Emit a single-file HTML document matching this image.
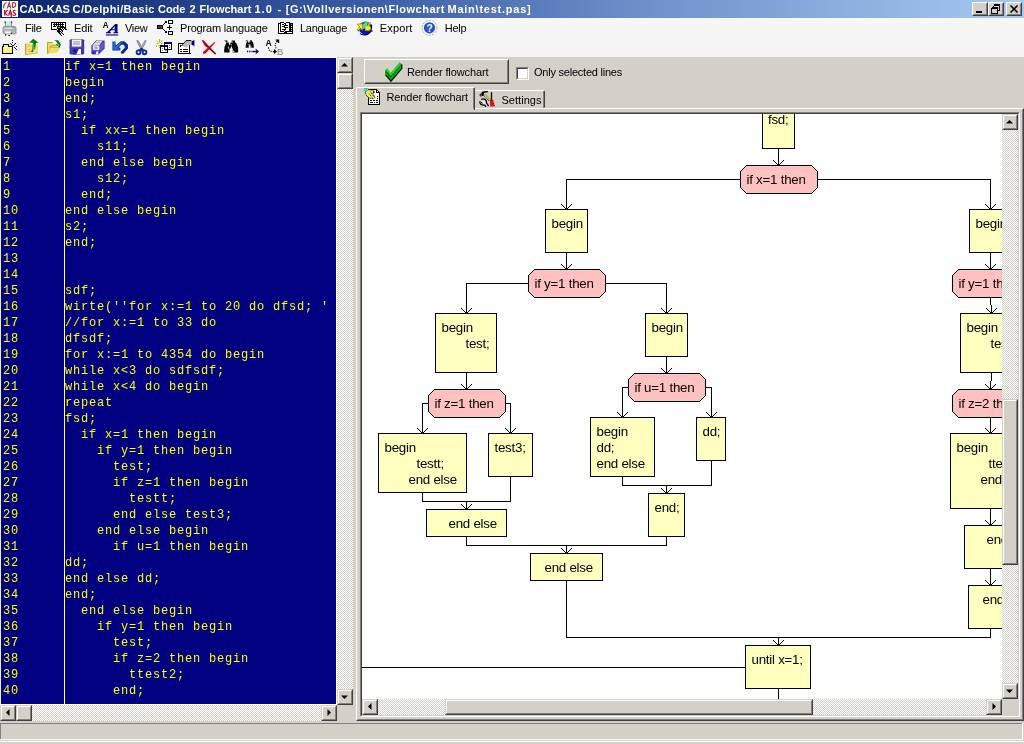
<!DOCTYPE html><html><head><meta charset="utf-8"><title>CAD-KAS Code 2 Flowchart</title><style>
html,body{margin:0;padding:0;}
body{width:1024px;height:744px;overflow:hidden;background:#d4d0c8;position:relative;font-family:"Liberation Sans",sans-serif;}
.abs,.t,.b3,.tr,div,svg{position:absolute;}
.t{white-space:pre;font-family:"Liberation Sans",sans-serif;}
#root{left:0;top:0;width:1024px;height:744px;will-change:transform;}
.m{font-family:"Liberation Mono",monospace;}
.dither{background:repeating-conic-gradient(#ffffff 0 25%,#d4d0c8 0 50%) 0 0/2px 2px;}
/* classic raised button */
.b3{background:#d4d0c8;box-sizing:border-box;border:1px solid;border-color:#d4d0c8 #404040 #404040 #d4d0c8;}
.b3:before{content:"";position:absolute;left:0;top:0;right:0;bottom:0;border:1px solid;border-color:#ffffff #808080 #808080 #ffffff;}
.b3w{background:#d4d0c8;box-sizing:border-box;border:1px solid;border-color:#ffffff #404040 #404040 #ffffff;}
.b3w:before{content:"";position:absolute;left:0;top:0;right:0;bottom:0;border:1px solid;border-color:#d4d0c8 #808080 #808080 #d4d0c8;}
</style></head><body><div id="root">
<div style="left:0;top:0;width:1024px;height:18px;background:linear-gradient(90deg,#0a246a 0%,#3a5ba3 35%,#6b8fc9 62%,#a6caf0 100%);"></div>
<svg style="left:2px;top:1px" width="16" height="16" viewBox="0 0 16 16"><rect width="16" height="16" fill="#fff"/><path d="M4.5 1.5C2.5 2.5 1.3 5 1.8 7.3 M5.2 7.5L7.3 1.5L8.6 7.2 M6 5.4h2.4 M10.5 1.8v5 M10.5 1.8c4-1 4.6 4 .2 5" fill="none" stroke="#9c3a3a" stroke-width="1.1"/><path d="M2.6 9v5.5 M5.6 9L2.8 12L5.8 14.6 M6.6 14.6L8.3 9.2L10 14.6 M7.2 12.8h2.2 M13.6 9.6c-2.4-1-3.2 1.6-1.2 2.3c2.2.8 1.4 3.2-1.4 2.2 M9.3 12v4" fill="none" stroke="#d0142c" stroke-width="1.25"/></svg>
<span class="t " style="left:19.5px;top:2.19px;font-size:11px;line-height:14px;height:14px;color:#fff;font-weight:bold;letter-spacing:-0.060px;">CAD-KAS</span>
<span class="t " style="left:72.6px;top:2.19px;font-size:11px;line-height:14px;height:14px;color:#fff;font-weight:bold;letter-spacing:0.370px;">C/Delphi/Basic</span>
<span class="t " style="left:158.1px;top:2.19px;font-size:11px;line-height:14px;height:14px;color:#fff;font-weight:bold;letter-spacing:-0.075px;">Code</span>
<span class="t " style="left:189.4px;top:2.19px;font-size:11px;line-height:14px;height:14px;color:#fff;font-weight:bold;letter-spacing:0.682px;">2</span>
<span class="t " style="left:199.5px;top:2.19px;font-size:11px;line-height:14px;height:14px;color:#fff;font-weight:bold;letter-spacing:-0.017px;">Flowchart</span>
<span class="t " style="left:254.5px;top:2.19px;font-size:11px;line-height:14px;height:14px;color:#fff;font-weight:bold;letter-spacing:1.003px;">1.0</span>
<span class="t " style="left:277.4px;top:2.19px;font-size:11px;line-height:14px;height:14px;color:#fff;font-weight:bold;letter-spacing:2.036px;">-</span>
<span class="t " style="left:285.8px;top:2.19px;font-size:11px;line-height:14px;height:14px;color:#fff;font-weight:bold;letter-spacing:0.516px;">[G:\Vollversionen\Flowchart</span>
<span class="t " style="left:447.5px;top:2.19px;font-size:11px;line-height:14px;height:14px;color:#fff;font-weight:bold;letter-spacing:0.761px;">Main\test.pas]</span>
<div class="b3w" style="left:972px;top:2px;width:16px;height:14px;"></div>
<div style="left:976px;top:11px;width:6px;height:2px;background:#000"></div>
<div class="b3w" style="left:988px;top:2px;width:16px;height:14px;"></div>
<svg style="left:988px;top:2px" width="16" height="14" shape-rendering="crispEdges"><path d="M5.5 3.5h6v5h-2 M5.5 2.5h6 M5.5 3.5v2 M3.5 6.5h6v5h-6z M3.5 5.5h6" fill="none" stroke="#000"/></svg>
<div class="b3w" style="left:1006px;top:2px;width:16px;height:14px;"></div>
<svg style="left:1006px;top:2px" width="16" height="14"><path d="M4.5 3.5l7 7 M11.5 3.5l-7 7" fill="none" stroke="#000" stroke-width="1.7"/></svg>
<div style="left:0;top:18px;width:1024px;height:39px;background:linear-gradient(180deg,#fbf6f6 0,#f7f6f5 4px,#f4f5f4 14px,#f4f5f3 100%);"></div>
<svg style="left:2px;top:20px" width="16" height="16" viewBox="0 0 16 16"><path d="M3.2 1.2L3.8 6.5H9.6L9.2 1.2" fill="#cfe9f0" stroke="#6c94a0" stroke-width="0.9"/><path d="M2.8 1.6L3.6 3.2 M9.4 1.4L9.9 3.4" stroke="#3c5870" stroke-width="1.2"/><rect x="1" y="6.3" width="13" height="7.4" rx="2" fill="#b4b4b4" stroke="#8c8c8c" stroke-width="0.9"/><path d="M2.4 8.2h10" stroke="#dcdcdc" stroke-width="1.4"/><path d="M3 12.4h6" stroke="#f4f4f4" stroke-width="2.2"/><rect x="9.5" y="9.6" width="2.6" height="1.5" fill="#86c08a"/><path d="M10 7.6h3" stroke="#8c8c8c" stroke-width="0.9"/><path d="M3 14.6l1.2.6 M6.5 15.4l1.4.3" stroke="#111" stroke-width="1.4"/><path d="M8.5 13.6l5 .4 1.6-1.2" fill="none" stroke="#a8a8a0" stroke-width="1"/><rect x="8.6" y="12.6" width="1.6" height="1.6" fill="#50507a"/></svg>
<svg style="left:50px;top:21px" width="18" height="16" viewBox="0 0 18 16" shape-rendering="crispEdges"><rect x="1.5" y="1.5" width="14" height="7" fill="#fff" stroke="#000" stroke-width="1"/><rect x="2" y="1" width="13" height="1" fill="#000"/><rect x="3" y="3" width="11" height="1" fill="#000"/><rect x="3" y="5" width="11" height="1" fill="#000"/><rect x="3" y="2" width="11" height="1" fill="#fffbe0"/><rect x="3" y="4" width="11" height="1" fill="#fffbe0"/><path d="M4 2.5h10 M4 4.5h10" stroke="#000" stroke-width="1" stroke-dasharray="1 1"/><rect x="3" y="6" width="12" height="2" fill="#000"/><rect x="3" y="6" width="2" height="2" fill="#fff"/><path d="M5.5 6L12.5 15" stroke="#fff" stroke-width="2.2"/><path d="M6 8L12.5 15.5 M8 8.5L14 14" stroke="#000" stroke-width="1"/><path d="M9 7h7l-3.5 4.5z" fill="#000"/><path d="M10.5 7.5h4 M11.5 8.5h3 M12.5 9.5h1" stroke="#fff" stroke-width="1" stroke-dasharray="1 1"/><rect x="16" y="8" width="1" height="1" fill="#000"/><rect x="7" y="7" width="3" height="1" fill="#000"/><rect x="8" y="6" width="2" height="1" fill="#aaa"/></svg>
<svg style="left:102px;top:19px" width="18" height="18" viewBox="0 0 18 18"><text x="0.8" y="8.5" font-family="Liberation Sans" font-weight="bold" font-size="9" fill="#000" textLength="5.8" lengthAdjust="spacingAndGlyphs">A</text><path d="M13.2 5H15.5V13L16.2 13.2V14.2H11.6V13.2L12.700 13V11.200H9.200L7.600 13L8.800 13.2V14.2H4V13.2L5.300 13z M12.700 7.200L10 10.200H12.700z" fill="#000080" fill-rule="evenodd"/><rect x="4" y="15.4" width="12.2" height="1.1" fill="#000080"/></svg>
<svg style="left:156px;top:19px" width="18" height="17" viewBox="0 0 18 17" shape-rendering="crispEdges"><rect x="1.5" y="6.5" width="5" height="3" fill="#6e2c6e" stroke="#000"/><rect x="12.5" y="1.5" width="4" height="3" fill="#fff" stroke="#000"/><rect x="12.5" y="12.5" width="4" height="3" fill="#fff" stroke="#000"/><rect x="11" y="8" width="5" height="1" fill="#000"/><rect x="13" y="6" width="1" height="5" fill="#000"/><rect x="7" y="5" width="1" height="1" fill="#000"/><rect x="8" y="4" width="1" height="1" fill="#000"/><rect x="9" y="3" width="1" height="1" fill="#000"/><path d="M8 2h3v3z" fill="#000"/><rect x="7" y="10" width="1" height="1" fill="#000"/><rect x="8" y="11" width="1" height="1" fill="#000"/><rect x="9" y="12" width="1" height="1" fill="#000"/><path d="M8 14h3v-3z" fill="#000"/></svg>
<svg style="left:277px;top:21px" width="18" height="14" viewBox="0 0 18 14" shape-rendering="crispEdges"><rect x="1" y="2" width="15" height="11" fill="#000"/><rect x="2" y="3" width="1" height="8" fill="#fff"/><rect x="2" y="11" width="5" height="1" fill="#fff"/><rect x="10" y="11" width="5" height="1" fill="#fff"/><rect x="3" y="1" width="4" height="10" fill="#000"/><rect x="4" y="2" width="3" height="8" fill="#fff"/><rect x="9" y="1" width="4" height="10" fill="#000"/><rect x="9" y="2" width="3" height="8" fill="#fff"/><rect x="5" y="3" width="2" height="1" fill="#000"/><rect x="5" y="5" width="2" height="1" fill="#000"/><rect x="5" y="8" width="2" height="1" fill="#000"/><rect x="9" y="4" width="2" height="1" fill="#000"/><rect x="9" y="6" width="2" height="1" fill="#000"/><rect x="7" y="2" width="2" height="10" fill="#000"/><rect x="7" y="3" width="1" height="1" fill="#fff"/><rect x="8" y="5" width="1" height="1" fill="#fff"/><rect x="7" y="7" width="1" height="1" fill="#fff"/><rect x="8" y="9" width="1" height="1" fill="#fff"/><rect x="7" y="10" width="1" height="1" fill="#fff"/><rect x="14" y="3" width="1" height="1" fill="#a06060"/><rect x="14" y="5" width="1" height="1" fill="#fff"/><rect x="14" y="7" width="1" height="1" fill="#fff"/><rect x="14" y="9" width="1" height="1" fill="#9cc0a0"/></svg>
<svg style="left:356px;top:20px" width="18" height="16" viewBox="0 0 18 16"><circle cx="9.5" cy="8.2" r="6.6" fill="#1010c8"/><path d="M5 4.5C7 1 12 1 14.5 4L13 8.5H8L6.5 9.5z" fill="#30e0d8"/><path d="M5.2 4.4C6.4 2.6 8 1.8 9.6 1.7L8.4 3.6L6.6 4.8z M11.6 2.6L14.2 4L12.6 6.6L11 5.4z" fill="#108a20"/><path d="M1.2 4h5.4v6.2L5 8.8L2.6 11.6L1 9.8L3.6 7z" fill="#ffee10" stroke="#8a7a10" stroke-width="0.7"/><path d="M2 11l3-3" stroke="#304010" stroke-width="1" stroke-dasharray="1 0.6"/><path d="M15 2.6L12.6 5.4L14.6 7.2V10.6H9.2V5L11.2 6.2L13.4 2.4z" fill="#ffee10" stroke="#a09010" stroke-width="0.5"/><path d="M15.6 4.5v3 M14 9.5l1 1.6h1.6" stroke="#000" stroke-width="1" fill="none"/><path d="M4 13.6c2.5 2 7.5 2 10.4-1.8" fill="none" stroke="#000040" stroke-width="1.2"/></svg>
<svg style="left:421px;top:19px" width="18" height="18" viewBox="0 0 18 18"><circle cx="8.5" cy="8.8" r="7.4" fill="#f4f8ff" stroke="#8c94a8" stroke-width="0.7" stroke-dasharray="2.2 1.2"/><circle cx="8.5" cy="8.8" r="5.6" fill="#2c50c0"/><circle cx="7.6" cy="8" r="3.6" fill="#3a5cd0" opacity="0.6"/><text x="5.5" y="12.6" font-family="Liberation Sans" font-weight="bold" font-size="10.5" fill="#e8ffff">?</text></svg>
<svg style="left:1px;top:38px" width="18" height="18" viewBox="0 0 18 18" shape-rendering="crispEdges"><path d="M1.5 15.5V8.5H2.5V6.5H7.5V8.5H11.5V15.5z" fill="#f2f088" stroke="#000" stroke-width="1"/><rect x="3" y="8" width="4" height="1" fill="#f2f088"/><path d="M3.5 9.5h7" stroke="#fdfdc8" stroke-width="1"/><rect x="11" y="2" width="1" height="1" fill="#000"/><rect x="11" y="4" width="1" height="1" fill="#000"/><rect x="9" y="5" width="1" height="1" fill="#333"/><rect x="10" y="6" width="1" height="1" fill="#000"/><rect x="14" y="5" width="1" height="1" fill="#000"/><rect x="13" y="6" width="1" height="1" fill="#000"/><rect x="12" y="7" width="1" height="1" fill="#000"/><rect x="15" y="8" width="1" height="1" fill="#000"/><rect x="13" y="9" width="1" height="1" fill="#000"/><rect x="14" y="10" width="1" height="1" fill="#000"/><rect x="15" y="11" width="1" height="1" fill="#333"/><rect x="11" y="7" width="1" height="2" fill="#444"/></svg>
<svg style="left:23px;top:38px" width="18" height="18" viewBox="0 0 18 18"><path d="M2.5 5.5H7L8 6.8H14.6V14.6L3 16.6z" fill="#ecd264"/><path d="M2.5 5.5V16.6L14.6 14.6" fill="none" stroke="#c8a83c" stroke-width="1.2"/><path d="M3.6 9.2L14.6 8.4V14.6L3.4 16.4z" fill="#f2e070"/><path d="M5 11.5h3 M5.5 13.5h2.5" stroke="#f0b060" stroke-width="1"/><path d="M6.2 4.8L10.2 0.8L15.4 4.4L13 5L12.2 10.6L9.2 13.4L9.8 4.8z" fill="#0c7a18"/><path d="M10.6 3.2L11.4 11L10 12.2z" fill="#52d458"/><path d="M8.4 13.6l1.4-.6" stroke="#052" stroke-width="1.4"/></svg>
<svg style="left:45px;top:38px" width="18" height="18" viewBox="0 0 18 18"><path d="M2.5 4.6H7.6L8.6 6H12.8V9.2L15.2 9.6L12.4 14.4L2.5 15.8z" fill="#ece068"/><path d="M2.5 4.6V15.8 M2.5 4.6H7.6 M4.4 9.4L6 7.8H11.5" fill="none" stroke="#b8a030" stroke-width="1"/><path d="M3 15.6L5.2 9.4L15.2 9.6" fill="none" stroke="#c8b040" stroke-width="0.8"/><path d="M9.2 2.2H13.2L16 6.6L14.4 9.4L10.8 6.4L12.2 5.6L11.4 3.4z" fill="#0a6a14"/><path d="M12.4 4.6L14.6 7.2L13.8 8.2L11.8 6.4z" fill="#5adc5a"/></svg>
<svg style="left:68px;top:38px" width="18" height="18" viewBox="0 0 18 18"><path d="M1.6 2.2L2.6 1.2H15.2L16.2 2.2V15.6L15.2 16.6H2.6L1.6 15.6z" fill="#3a38ac"/><path d="M1.6 9.5h14.6" stroke="#4a48c8" stroke-width="1.4"/><rect x="3.8" y="1.6" width="9.6" height="7" fill="#f6f6fa"/><rect x="5" y="3.2" width="7" height="1.2" fill="#a8a8a8"/><rect x="5" y="5" width="7" height="1.8" fill="#b4b4b4"/><rect x="5.2" y="11" width="7" height="5.6" fill="#2c2a90"/><path d="M8.2 16.6L10.8 11H13V16.6z" fill="#f4f4fa"/><path d="M6 11.4h2.2l-1.4 3z" fill="#101060"/></svg>
<svg style="left:89px;top:38px" width="18" height="18" viewBox="0 0 18 18"><path d="M2.4 8.2L7.4 2.4H15.6V10.4L9.6 16.4H3.6L2.4 15.2z" fill="#3c38b0"/><path d="M2.4 8.2L7.4 2.4H13.6L10.2 7.4H4.4z" fill="#dcdce4"/><path d="M3.8 7.6H10.4V12.2H3.8z" fill="#e8e8ec"/><path d="M5 8.6h3.4v2.6H5z" fill="#c0c0c4"/><path d="M6 9.4h1.6v1.2" fill="none" stroke="#888" stroke-width="0.7"/><path d="M7.6 2.6H13.4" stroke="#a8a8ac" stroke-width="1"/><path d="M6.6 4.4H11" stroke="#b8b8bc" stroke-width="1"/><path d="M2.4 8.2L7.4 2.4" stroke="#404060" stroke-width="0.8"/><path d="M11.4 7.6L12.6 5V12L11.4 14z M13.4 5L14.4 3.4V10L13.4 11.6z" fill="#7874d8"/><path d="M6.6 16.4L7.6 13H9.4L9.2 16.4z" fill="#f0f0f6"/><path d="M3.4 12.4L9 12.8" stroke="#5a58d0" stroke-width="1.4"/></svg>
<svg style="left:111px;top:38px" width="18" height="18" viewBox="0 0 18 18"><path d="M1.4 3.4H4.6V7.6L9.8 3.2H13.4L17 6.8V10.4L12.4 15.8H10.2L9.6 14L13.6 9.8V8L12.2 6.8H10.4L7.6 9.6H9.4V12.6H1.4z" fill="#0c3c9c"/><path d="M2.4 4.2H3.8V9.4L9.4 4.6L11 4.4L5.4 10.4H8.4V11.6H2.4z" fill="#2a7ad8"/><path d="M12.6 4.4L15.8 7.2V9.8L11.4 14.6" fill="none" stroke="#0a2a78" stroke-width="1.2"/></svg>
<svg style="left:133px;top:38px" width="18" height="18" viewBox="0 0 18 18"><path d="M3.400 2L5.600 2.600L10 10.800L7.800 11.600L4.200 5z" fill="#787888"/><path d="M13.600 2L11.400 2.600L7 10.800L9.200 11.600L12.800 5z" fill="#8c8c9c"/><path d="M4.600 3.400L8.600 10.600 M12.400 3.400L8.400 10.600" stroke="#b8b8c8" stroke-width="0.8"/><path d="M8.500 9.600L11 11.400L13.400 12.200L11.400 13.400L9.400 12.400L8.500 13.400L7.600 12.400L5.600 13.400L3.600 12.200L6 11.400z" fill="#0a2ca4"/><circle cx="5.500" cy="14.300" r="1.900" fill="#fff" stroke="#0a2ca4" stroke-width="1.9"/><circle cx="11.500" cy="14.300" r="1.900" fill="#fff" stroke="#0a2ca4" stroke-width="1.9"/></svg>
<svg style="left:155px;top:38px" width="18" height="18" viewBox="0 0 18 18"><path d="M4.5 1v7 M1.5 5.5h6 M2 2.6l5 5 M7.4 2.2L3 7.6" stroke="#b4b428" stroke-width="1"/><rect x="3.4" y="4.4" width="2.6" height="2.6" fill="#f8f870"/><rect x="1" y="7.6" width="1" height="1" fill="#666"/><path d="M4 8.6L5.5 10.5" stroke="#889" stroke-width="1"/><g shape-rendering="crispEdges"><rect x="9.5" y="4.5" width="7" height="7" fill="#fff" stroke="#000"/><rect x="9" y="4" width="8" height="2" fill="#000068"/><rect x="14" y="7" width="1" height="1" fill="#666"/><rect x="14" y="9" width="1" height="1" fill="#666"/><rect x="5.500" y="7.5" width="7" height="7" fill="#fff" stroke="#000"/><rect x="5" y="7" width="8" height="2" fill="#000068"/><rect x="9.5" y="8.5" width="3" height="3" fill="#fff" stroke="#000"/><rect x="7" y="10" width="1" height="1" fill="#666"/><rect x="7" y="12" width="1" height="1" fill="#666"/><rect x="10" y="12" width="2" height="1" fill="#888"/></g></svg>
<svg style="left:177px;top:38px" width="19" height="18" viewBox="0 0 19 18"><g shape-rendering="crispEdges"><rect x="1.5" y="5.5" width="11" height="10" fill="#fff" stroke="#000" stroke-width="1"/><rect x="1" y="5" width="12" height="1" fill="#000"/><rect x="1" y="15" width="13" height="1" fill="#000"/><rect x="3" y="11" width="2" height="1" fill="#000"/><rect x="6" y="11" width="5" height="1" fill="#000"/><rect x="3" y="13" width="2" height="1" fill="#000"/><rect x="6" y="13" width="5" height="1" fill="#000"/><rect x="3" y="7" width="1" height="2" fill="#000"/></g><path d="M4.4 8L9 2.6H14.4V7L11.8 7.2L9.6 9.6z" fill="#a8a8a8"/><path d="M4.4 8L9 2.6H14.2" fill="none" stroke="#000" stroke-width="1"/><path d="M5 8l4-4.6 M6.4 8.4l4-4.6 M7.8 8.8l3.6-4.2 M9.2 9.2l2.6-3" stroke="#fff" stroke-width="0.7" stroke-dasharray="0.9 0.9"/><path d="M10.4 3.4H14.6V6.8H11.6z" fill="#c4c4c8"/><path d="M14.6 3.2L17.4 2V8.6L16.4 7.4L14.6 6.8z" fill="#00007c"/></svg>
<svg style="left:199px;top:38px" width="19" height="18" viewBox="0 0 19 18"><path d="M2.6 2.2L4.4 2.2L17 15.6L16.2 16.6L11 11.6L6 8z" fill="#b00018"/><path d="M16.4 4.6L15.6 4L4 14L4.4 16L6.4 15.4z" fill="#cc0014"/><path d="M10 10.4L16.6 16" stroke="#800020" stroke-width="1.2"/></svg>
<svg style="left:221px;top:39px" width="18" height="15" viewBox="0 0 18 15"><g transform="translate(0,0.6) scale(1.07,1)"><path d="M3 1h3v2h1l1 3h0l1-3h1v-2h3v2h1l2 5v5h-5v-4h-3v4h-5v-5l2-5z" fill="#000"/><rect x="4" y="2" width="1" height="1" fill="#fff"/><rect x="10" y="2" width="1" height="1" fill="#fff"/><rect x="3" y="4.6" width="1" height="1" fill="#fff"/><rect x="9" y="4.6" width="1" height="1" fill="#fff"/><rect x="2" y="7" width="1" height="2.4" fill="#fff"/><rect x="6.600" y="7" width="1" height="2" fill="#ccc"/><rect x="9.200" y="7" width="1" height="2.4" fill="#fff"/><rect x="1.4" y="11" width="1" height="1.6" fill="#fff"/><rect x="11.4" y="11" width="1" height="1.6" fill="#fff"/></g></svg>
<svg style="left:243px;top:38px" width="18" height="18" viewBox="0 0 18 18"><g transform="translate(0.8,1.6) scale(0.62)"><path d="M3 1h3v2h1l1 3h0l1-3h1v-2h3v2h1l2 5v5h-5v-4h-3v4h-5v-5l2-5z" fill="#000"/><rect x="4" y="2" width="1" height="1" fill="#fff"/><rect x="10" y="2" width="1" height="1" fill="#fff"/><rect x="3" y="4.6" width="1" height="1" fill="#fff"/><rect x="9" y="4.6" width="1" height="1" fill="#fff"/><rect x="2" y="7" width="1" height="2.4" fill="#fff"/><rect x="6.600" y="7" width="1" height="2" fill="#ccc"/><rect x="9.200" y="7" width="1" height="2.4" fill="#fff"/><rect x="1.4" y="11" width="1" height="1.6" fill="#fff"/><rect x="11.4" y="11" width="1" height="1.6" fill="#fff"/></g><path d="M4 13.5h6" stroke="#000070" stroke-width="1.3" stroke-dasharray="1.2 1"/><path d="M10 13.5h5" stroke="#000070" stroke-width="1.4"/><path d="M12.4 10.6L16 13.5L12.4 16.4L13.4 13.5z" fill="#000070"/></svg>
<svg style="left:264px;top:38px" width="20" height="18" viewBox="0 0 20 18"><text x="1.6" y="7.6" font-family="Liberation Sans" font-weight="bold" font-size="8.6" fill="#000">A</text><text x="13" y="16.6" font-family="Liberation Sans" font-size="9.4" fill="#808080">B</text><path d="M4.4 9.4C4.6 12.6 6.4 13.6 10 13.6" fill="none" stroke="#000" stroke-width="1.2" stroke-dasharray="1.1 1.2"/><path d="M10 11L13 13.6L10 16.2z" fill="#000"/><path d="M12.2 10.4C10.6 7.6 11.2 5 13.2 3" fill="none" stroke="#000" stroke-width="1.2" stroke-dasharray="1.1 1.2"/><path d="M11.6 1.4h3.6v3.6h-1.200v-1.600l-1 1-.8-.8 1-1h-1.600z" fill="#000"/></svg>
<span class="t " style="left:25.099999999999998px;top:21.19px;font-size:11px;line-height:14px;height:14px;color:#000;letter-spacing:-0.356px;">File</span>
<span class="t " style="left:74.10000000000001px;top:21.19px;font-size:11px;line-height:14px;height:14px;color:#000;letter-spacing:-0.189px;">Edit</span>
<span class="t " style="left:125.10000000000001px;top:21.19px;font-size:11px;line-height:14px;height:14px;color:#000;letter-spacing:-0.361px;">View</span>
<span class="t " style="left:180.0px;top:21.19px;font-size:11px;line-height:14px;height:14px;color:#000;letter-spacing:-0.175px;">Program language</span>
<span class="t " style="left:299.9px;top:21.19px;font-size:11px;line-height:14px;height:14px;color:#000;letter-spacing:-0.218px;">Language</span>
<span class="t " style="left:379.8px;top:21.19px;font-size:11px;line-height:14px;height:14px;color:#000;letter-spacing:0.168px;">Export</span>
<span class="t " style="left:444.8px;top:21.19px;font-size:11px;line-height:14px;height:14px;color:#000;letter-spacing:-0.281px;">Help</span>
<div style="left:0;top:57px;width:353px;height:664px;background:#d4d0c8"></div>
<div style="left:0;top:57px;width:337px;height:1px;background:#fff"></div>
<div style="left:0;top:58px;width:1px;height:647px;background:#f0f0f0"></div>
<div style="left:1px;top:58px;width:335px;height:646px;background:#000080"></div><div style="left:336px;top:58px;width:1px;height:647px;background:#fff"></div>
<div style="left:1px;top:704px;width:336px;height:1px;background:#fff"></div>
<div style="left:64px;top:58px;width:1px;height:646px;background:#fff"></div>
<div class="m" style="left:1px;top:58px;width:335px;height:646px;overflow:hidden;color:#ffff00;font-size:12.0px;letter-spacing:0.800px;line-height:16px;white-space:pre;-webkit-font-smoothing:none;">
<div class="m" style="left:2px;top:1px;">1
2
3
4
5
6
7
8
9
10
11
12
13
14
15
16
17
18
19
20
21
22
23
24
25
26
27
28
29
30
31
32
33
34
35
36
37
38
39
40</div>
<div class="m" style="left:64px;top:1px;">if x=1 then begin
begin
end;
s1;
  if xx=1 then begin
    s11;
  end else begin
    s12;
  end;
end else begin
s2;
end;


sdf;
wirte(''for x:=1 to 20 do dfsd; '
//for x:=1 to 33 do
dfsdf;
for x:=1 to 4354 do begin
while x&lt;3 do sdfsdf;
while x&lt;4 do begin
repeat
fsd;
  if x=1 then begin
    if y=1 then begin
      test;
      if z=1 then begin
        testt;
      end else test3;
    end else begin
      if u=1 then begin
dd;
end else dd;
end;
  end else begin
    if y=1 then begin
      test;
      if z=2 then begin
        ttest2;
      end;</div>
</div>
<div class="dither" style="left:337px;top:57px;width:16px;height:648px;"></div>
<div class="b3" style="left:337px;top:57px;width:16px;height:16px;"></div>
<svg style="left:337px;top:57px" width="16" height="16"><path d="M4 9.5h7l-3.5-3.5z" fill="#000"/></svg>
<div class="b3" style="left:337px;top:73px;width:16px;height:16px;"></div>
<div class="b3" style="left:337px;top:689px;width:16px;height:16px;"></div>
<svg style="left:337px;top:689px" width="16" height="16"><path d="M4 6.5h7l-3.5 3.5z" fill="#000"/></svg>
<div class="dither" style="left:0px;top:705px;width:337px;height:16px;"></div>
<div class="b3" style="left:0px;top:705px;width:16px;height:16px;"></div>
<svg style="left:0px;top:705px" width="16" height="16"><path d="M9.5 4v7l-3.5-3.5z" fill="#000"/></svg>
<div class="b3" style="left:16px;top:705px;width:16px;height:16px;"></div>
<div class="b3" style="left:321px;top:705px;width:16px;height:16px;"></div>
<svg style="left:321px;top:705px" width="16" height="16"><path d="M6.5 4v7l3.5-3.5z" fill="#000"/></svg>
<div style="left:337px;top:705px;width:16px;height:16px;background:#d4d0c8"></div>
<div class="b3w" style="left:364px;top:59px;width:145px;height:25px;"></div>
<span class="t " style="left:407px;top:65.19px;font-size:11px;line-height:14px;height:14px;color:#000;letter-spacing:-0.103px;">Render flowchart</span>
<div style="left:516px;top:67px;width:13px;height:13px;box-sizing:border-box;background:#fff;border:1px solid;border-color:#808080 #fff #fff #808080;"></div>
<div style="left:517px;top:68px;width:11px;height:11px;box-sizing:border-box;border:1px solid;border-color:#404040 #d4d0c8 #d4d0c8 #404040;"></div>
<span class="t " style="left:534px;top:65.19px;font-size:11px;line-height:14px;height:14px;color:#000;letter-spacing:-0.228px;">Only selected lines</span>
<div style="left:356px;top:108px;width:668px;height:613px;box-sizing:border-box;border:1px solid;border-color:#fff #404040 #404040 #fff;"></div>
<div style="left:357px;top:109px;width:666px;height:611px;box-sizing:border-box;border:1px solid;border-color:#d4d0c8 #808080 #808080 #d4d0c8;"></div>
<div style="left:474px;top:90px;width:71px;height:18px;box-sizing:border-box;border:1px solid;border-color:#fff #404040 transparent #fff;border-radius:2px 2px 0 0;"></div>
<div style="left:475px;top:91px;width:69px;height:17px;box-sizing:border-box;border-right:1px solid #808080;"></div>
<span class="t " style="left:501.5px;top:93.19px;font-size:11px;line-height:14px;height:14px;color:#000;letter-spacing:0.032px;">Settings</span>
<div style="left:356px;top:87px;width:119px;height:23px;box-sizing:border-box;background:#d4d0c8;border:1px solid;border-color:#fff #404040 #d4d0c8 #fff;border-bottom:none;border-radius:2px 2px 0 0;"></div>
<div style="left:357px;top:88px;width:117px;height:21px;box-sizing:border-box;border-right:1px solid #808080;"></div>
<span class="t " style="left:386.5px;top:90.19px;font-size:11px;line-height:14px;height:14px;color:#000;letter-spacing:-0.103px;">Render flowchart</span>
<svg style="left:383px;top:60px" width="22" height="23" viewBox="0 0 22 23"><path d="M2 10.6L4.2 8.6L7.8 13L16.6 2.4L18.6 4V8.6L8 21.200L2 14.400z" fill="#14a01c"/><path d="M2 10.6L4.2 8.6L7.8 13L16.6 2.4L18.600 4L7.8 16.6z" fill="#22d42a"/><path d="M3 11.400L7.8 17.200L18.600 5" fill="none" stroke="#0a6e10" stroke-width="1.3"/><path d="M2.6 14.8L8 21.200L18.800 8.6V4.2" fill="none" stroke="#001a00" stroke-width="1.2"/><path d="M7.8 17.600L18 6" fill="none" stroke="#30e040" stroke-width="0.8" stroke-dasharray="1.4 1"/></svg>
<svg style="left:363px;top:87px" width="18" height="19" viewBox="0 0 18 19"><path d="M1 1H5.4L1.6 5.600z" fill="#20d8c8"/><g shape-rendering="crispEdges"><path d="M5.500 2.5H13.500L16.500 5.5V17.500H5.500z" fill="#fff" stroke="#000" stroke-width="1"/><path d="M13.500 2.5V5.5H16.500" fill="none" stroke="#000"/><rect x="5" y="2" width="9" height="1" fill="#000"/><rect x="5" y="17" width="12" height="1" fill="#000"/><rect x="7" y="13" width="2" height="1" fill="#000"/><rect x="10" y="13" width="2" height="1" fill="#000"/><rect x="13" y="13" width="2" height="1" fill="#000"/><rect x="7" y="15" width="3" height="1" fill="#000"/><rect x="11" y="15" width="1" height="1" fill="#000"/><rect x="13" y="15" width="2" height="1" fill="#000"/><rect x="14" y="9" width="1" height="1" fill="#000"/><rect x="14" y="11" width="1" height="1" fill="#000"/></g><path d="M2.2 5.4L5.6 2.6L10.400 3.6L11.400 6L9.400 6.2L12.200 10.400L10.200 11.800L6.800 11.200L3.600 8.8z" fill="#f4ec5c" stroke="#000" stroke-width="0.9" stroke-dasharray="1 0.8"/><path d="M7.200 4.600L11.600 10.600 M6 6.600L9.800 11.400" stroke="#000" stroke-width="0.9" stroke-dasharray="1 1"/><path d="M9.600 4.400L12 4.200L10.800 6z" fill="#000"/></svg>
<svg style="left:478px;top:90px" width="18" height="18" viewBox="0 0 18 18"><path d="M1.4 4.400L3.400 3.200L4.400 1.400L10.200 1L9.800 2.200L6.400 2.800L5.400 5.400L3.400 6.600L2 6.200z" fill="#000"/><rect x="2.6" y="4.600" width="1" height="1" fill="#fff"/><path d="M5.800 4.600L12.200 10.600L13.400 9.400L7.400 3.600z" fill="#b4b43c"/><path d="M5.600 5.400L11.600 11.400" stroke="#000" stroke-width="1" stroke-dasharray="1 0.7"/><path d="M13.500 2.200V10" stroke="#000" stroke-width="1.3"/><path d="M11.800 9.800H15.400L16 16.400H12.200z" fill="#e01010"/><path d="M15.600 13.400L16.800 16.600" stroke="#000" stroke-width="1" stroke-dasharray="1 1"/><path d="M3.400 9.400C6.600 8 8.800 10 8.600 13.200L10.600 16.200 M2 11.200C1.200 14 3.400 15.400 6.400 15.200L8.200 16.800" fill="none" stroke="#000" stroke-width="1.2"/><path d="M3.600 11.400C5.600 10.600 7 11.600 6.800 13.600C5 14 3.600 13.400 3.600 11.400z" fill="#fff"/><path d="M3 12.400L4.800 13.200" stroke="#000" stroke-width="1"/></svg>
<div style="left:360px;top:112px;width:660px;height:605px;box-sizing:border-box;border:1px solid;border-color:#808080 #fff #fff #808080;"></div>
<div style="left:361px;top:113px;width:658px;height:603px;box-sizing:border-box;border:1px solid;border-color:#404040 #d4d0c8 #d4d0c8 #404040;"></div>
<div id="cv" style="left:362px;top:114px;width:640px;height:585px;background:#fff;overflow:hidden;">
<svg style="left:0;top:0" width="640" height="585" shape-rendering="crispEdges"><rect x="400.5" y="-13.5" width="32" height="48" fill="#ffffc0" stroke="#000"/><path d="M416.5 34.5 L416.5 51.5" fill="none" stroke="#000"/><rect x="415" y="50" width="1" height="1" fill="#000"/><rect x="417" y="50" width="1" height="1" fill="#000"/><rect x="414" y="49" width="1" height="1" fill="#000"/><rect x="418" y="49" width="1" height="1" fill="#000"/><rect x="413" y="48" width="1" height="1" fill="#000"/><rect x="419" y="48" width="1" height="1" fill="#000"/><rect x="412" y="47" width="1" height="1" fill="#000"/><rect x="420" y="47" width="1" height="1" fill="#000"/><rect x="411" y="46" width="1" height="1" fill="#000"/><rect x="421" y="46" width="1" height="1" fill="#000"/><path d="M384.5 51.5H449.5L455.5 57.5V73.5L449.5 79.5H384.5L378.5 73.5V57.5Z" fill="#ffc0c0" stroke="#000"/><path d="M378.5 65.5 L204.5 65.5 L204.5 95.5" fill="none" stroke="#000"/><rect x="203" y="94" width="1" height="1" fill="#000"/><rect x="205" y="94" width="1" height="1" fill="#000"/><rect x="202" y="93" width="1" height="1" fill="#000"/><rect x="206" y="93" width="1" height="1" fill="#000"/><rect x="201" y="92" width="1" height="1" fill="#000"/><rect x="207" y="92" width="1" height="1" fill="#000"/><rect x="200" y="91" width="1" height="1" fill="#000"/><rect x="208" y="91" width="1" height="1" fill="#000"/><rect x="199" y="90" width="1" height="1" fill="#000"/><rect x="209" y="90" width="1" height="1" fill="#000"/><rect x="183.5" y="95.5" width="42" height="43" fill="#ffffc0" stroke="#000"/><path d="M204.5 138.5 L204.5 155.5" fill="none" stroke="#000"/><rect x="203" y="154" width="1" height="1" fill="#000"/><rect x="205" y="154" width="1" height="1" fill="#000"/><rect x="202" y="153" width="1" height="1" fill="#000"/><rect x="206" y="153" width="1" height="1" fill="#000"/><rect x="201" y="152" width="1" height="1" fill="#000"/><rect x="207" y="152" width="1" height="1" fill="#000"/><rect x="200" y="151" width="1" height="1" fill="#000"/><rect x="208" y="151" width="1" height="1" fill="#000"/><rect x="199" y="150" width="1" height="1" fill="#000"/><rect x="209" y="150" width="1" height="1" fill="#000"/><path d="M172.5 155.5H237.5L243.5 161.5V177.5L237.5 183.5H172.5L166.5 177.5V161.5Z" fill="#ffc0c0" stroke="#000"/><path d="M166.5 169.5 L104.5 169.5 L104.5 199.5" fill="none" stroke="#000"/><rect x="103" y="198" width="1" height="1" fill="#000"/><rect x="105" y="198" width="1" height="1" fill="#000"/><rect x="102" y="197" width="1" height="1" fill="#000"/><rect x="106" y="197" width="1" height="1" fill="#000"/><rect x="101" y="196" width="1" height="1" fill="#000"/><rect x="107" y="196" width="1" height="1" fill="#000"/><rect x="100" y="195" width="1" height="1" fill="#000"/><rect x="108" y="195" width="1" height="1" fill="#000"/><rect x="99" y="194" width="1" height="1" fill="#000"/><rect x="109" y="194" width="1" height="1" fill="#000"/><rect x="73.5" y="199.5" width="61" height="59" fill="#ffffc0" stroke="#000"/><path d="M243.5 169.5 L304.5 169.5 L304.5 199.5" fill="none" stroke="#000"/><rect x="303" y="198" width="1" height="1" fill="#000"/><rect x="305" y="198" width="1" height="1" fill="#000"/><rect x="302" y="197" width="1" height="1" fill="#000"/><rect x="306" y="197" width="1" height="1" fill="#000"/><rect x="301" y="196" width="1" height="1" fill="#000"/><rect x="307" y="196" width="1" height="1" fill="#000"/><rect x="300" y="195" width="1" height="1" fill="#000"/><rect x="308" y="195" width="1" height="1" fill="#000"/><rect x="299" y="194" width="1" height="1" fill="#000"/><rect x="309" y="194" width="1" height="1" fill="#000"/><rect x="283.5" y="199.5" width="42" height="43" fill="#ffffc0" stroke="#000"/><path d="M104.5 258.5 L104.5 275.5" fill="none" stroke="#000"/><rect x="103" y="274" width="1" height="1" fill="#000"/><rect x="105" y="274" width="1" height="1" fill="#000"/><rect x="102" y="273" width="1" height="1" fill="#000"/><rect x="106" y="273" width="1" height="1" fill="#000"/><rect x="101" y="272" width="1" height="1" fill="#000"/><rect x="107" y="272" width="1" height="1" fill="#000"/><rect x="100" y="271" width="1" height="1" fill="#000"/><rect x="108" y="271" width="1" height="1" fill="#000"/><rect x="99" y="270" width="1" height="1" fill="#000"/><rect x="109" y="270" width="1" height="1" fill="#000"/><path d="M72.5 275.5H137.5L143.5 281.5V297.5L137.5 303.5H72.5L66.5 297.5V281.5Z" fill="#ffc0c0" stroke="#000"/><path d="M66.5 289.5 L60.5 289.5 L60.5 319.5" fill="none" stroke="#000"/><rect x="59" y="318" width="1" height="1" fill="#000"/><rect x="61" y="318" width="1" height="1" fill="#000"/><rect x="58" y="317" width="1" height="1" fill="#000"/><rect x="62" y="317" width="1" height="1" fill="#000"/><rect x="57" y="316" width="1" height="1" fill="#000"/><rect x="63" y="316" width="1" height="1" fill="#000"/><rect x="56" y="315" width="1" height="1" fill="#000"/><rect x="64" y="315" width="1" height="1" fill="#000"/><rect x="55" y="314" width="1" height="1" fill="#000"/><rect x="65" y="314" width="1" height="1" fill="#000"/><path d="M143.5 289.5 L148.5 289.5 L148.5 319.5" fill="none" stroke="#000"/><rect x="147" y="318" width="1" height="1" fill="#000"/><rect x="149" y="318" width="1" height="1" fill="#000"/><rect x="146" y="317" width="1" height="1" fill="#000"/><rect x="150" y="317" width="1" height="1" fill="#000"/><rect x="145" y="316" width="1" height="1" fill="#000"/><rect x="151" y="316" width="1" height="1" fill="#000"/><rect x="144" y="315" width="1" height="1" fill="#000"/><rect x="152" y="315" width="1" height="1" fill="#000"/><rect x="143" y="314" width="1" height="1" fill="#000"/><rect x="153" y="314" width="1" height="1" fill="#000"/><rect x="16.5" y="319.5" width="88" height="59" fill="#ffffc0" stroke="#000"/><rect x="126.5" y="319.5" width="44" height="43" fill="#ffffc0" stroke="#000"/><path d="M60.5 378.5 L60.5 387.5 L148.5 387.5 L148.5 362.5" fill="none" stroke="#000"/><path d="M104.5 387.5 L104.5 395.5" fill="none" stroke="#000"/><rect x="103" y="394" width="1" height="1" fill="#000"/><rect x="105" y="394" width="1" height="1" fill="#000"/><rect x="102" y="393" width="1" height="1" fill="#000"/><rect x="106" y="393" width="1" height="1" fill="#000"/><rect x="101" y="392" width="1" height="1" fill="#000"/><rect x="107" y="392" width="1" height="1" fill="#000"/><rect x="100" y="391" width="1" height="1" fill="#000"/><rect x="108" y="391" width="1" height="1" fill="#000"/><rect x="99" y="390" width="1" height="1" fill="#000"/><rect x="109" y="390" width="1" height="1" fill="#000"/><rect x="64.5" y="395.5" width="80" height="27" fill="#ffffc0" stroke="#000"/><path d="M304.5 242.5 L304.5 259.5" fill="none" stroke="#000"/><rect x="303" y="258" width="1" height="1" fill="#000"/><rect x="305" y="258" width="1" height="1" fill="#000"/><rect x="302" y="257" width="1" height="1" fill="#000"/><rect x="306" y="257" width="1" height="1" fill="#000"/><rect x="301" y="256" width="1" height="1" fill="#000"/><rect x="307" y="256" width="1" height="1" fill="#000"/><rect x="300" y="255" width="1" height="1" fill="#000"/><rect x="308" y="255" width="1" height="1" fill="#000"/><rect x="299" y="254" width="1" height="1" fill="#000"/><rect x="309" y="254" width="1" height="1" fill="#000"/><path d="M272.5 259.5H337.5L343.5 265.5V281.5L337.5 287.5H272.5L266.5 281.5V265.5Z" fill="#ffc0c0" stroke="#000"/><path d="M266.5 273.5 L260.5 273.5 L260.5 303.5" fill="none" stroke="#000"/><rect x="259" y="302" width="1" height="1" fill="#000"/><rect x="261" y="302" width="1" height="1" fill="#000"/><rect x="258" y="301" width="1" height="1" fill="#000"/><rect x="262" y="301" width="1" height="1" fill="#000"/><rect x="257" y="300" width="1" height="1" fill="#000"/><rect x="263" y="300" width="1" height="1" fill="#000"/><rect x="256" y="299" width="1" height="1" fill="#000"/><rect x="264" y="299" width="1" height="1" fill="#000"/><rect x="255" y="298" width="1" height="1" fill="#000"/><rect x="265" y="298" width="1" height="1" fill="#000"/><path d="M343.5 273.5 L349.5 273.5 L349.5 303.5" fill="none" stroke="#000"/><rect x="348" y="302" width="1" height="1" fill="#000"/><rect x="350" y="302" width="1" height="1" fill="#000"/><rect x="347" y="301" width="1" height="1" fill="#000"/><rect x="351" y="301" width="1" height="1" fill="#000"/><rect x="346" y="300" width="1" height="1" fill="#000"/><rect x="352" y="300" width="1" height="1" fill="#000"/><rect x="345" y="299" width="1" height="1" fill="#000"/><rect x="353" y="299" width="1" height="1" fill="#000"/><rect x="344" y="298" width="1" height="1" fill="#000"/><rect x="354" y="298" width="1" height="1" fill="#000"/><rect x="228.5" y="303.5" width="64" height="59" fill="#ffffc0" stroke="#000"/><rect x="334.5" y="303.5" width="29" height="43" fill="#ffffc0" stroke="#000"/><path d="M260.5 362.5 L260.5 371.5 L349.5 371.5 L349.5 346.5" fill="none" stroke="#000"/><path d="M304.5 371.5 L304.5 379.5" fill="none" stroke="#000"/><rect x="303" y="378" width="1" height="1" fill="#000"/><rect x="305" y="378" width="1" height="1" fill="#000"/><rect x="302" y="377" width="1" height="1" fill="#000"/><rect x="306" y="377" width="1" height="1" fill="#000"/><rect x="301" y="376" width="1" height="1" fill="#000"/><rect x="307" y="376" width="1" height="1" fill="#000"/><rect x="300" y="375" width="1" height="1" fill="#000"/><rect x="308" y="375" width="1" height="1" fill="#000"/><rect x="299" y="374" width="1" height="1" fill="#000"/><rect x="309" y="374" width="1" height="1" fill="#000"/><rect x="286.5" y="379.5" width="36" height="43" fill="#ffffc0" stroke="#000"/><path d="M104.5 422.5 L104.5 431.5 L304.5 431.5 L304.5 422.5" fill="none" stroke="#000"/><path d="M204.5 431.5 L204.5 439.5" fill="none" stroke="#000"/><rect x="203" y="438" width="1" height="1" fill="#000"/><rect x="205" y="438" width="1" height="1" fill="#000"/><rect x="202" y="437" width="1" height="1" fill="#000"/><rect x="206" y="437" width="1" height="1" fill="#000"/><rect x="201" y="436" width="1" height="1" fill="#000"/><rect x="207" y="436" width="1" height="1" fill="#000"/><rect x="200" y="435" width="1" height="1" fill="#000"/><rect x="208" y="435" width="1" height="1" fill="#000"/><rect x="199" y="434" width="1" height="1" fill="#000"/><rect x="209" y="434" width="1" height="1" fill="#000"/><rect x="168.5" y="439.5" width="72" height="27" fill="#ffffc0" stroke="#000"/><path d="M204.5 466.5 L204.5 523.5 L628.5 523.5 L628.5 514.5" fill="none" stroke="#000"/><path d="M416.5 523.5 L416.5 531.5" fill="none" stroke="#000"/><rect x="415" y="530" width="1" height="1" fill="#000"/><rect x="417" y="530" width="1" height="1" fill="#000"/><rect x="414" y="529" width="1" height="1" fill="#000"/><rect x="418" y="529" width="1" height="1" fill="#000"/><rect x="413" y="528" width="1" height="1" fill="#000"/><rect x="419" y="528" width="1" height="1" fill="#000"/><rect x="412" y="527" width="1" height="1" fill="#000"/><rect x="420" y="527" width="1" height="1" fill="#000"/><rect x="411" y="526" width="1" height="1" fill="#000"/><rect x="421" y="526" width="1" height="1" fill="#000"/><rect x="383.5" y="531.5" width="65" height="43" fill="#ffffc0" stroke="#000"/><path d="M-1.5 553.5 L383.5 553.5" fill="none" stroke="#000"/><path d="M416.5 574.5 L416.5 586.5" fill="none" stroke="#000"/><path d="M455.5 65.5 L628.5 65.5 L628.5 95.5" fill="none" stroke="#000"/><rect x="627" y="94" width="1" height="1" fill="#000"/><rect x="629" y="94" width="1" height="1" fill="#000"/><rect x="626" y="93" width="1" height="1" fill="#000"/><rect x="630" y="93" width="1" height="1" fill="#000"/><rect x="625" y="92" width="1" height="1" fill="#000"/><rect x="631" y="92" width="1" height="1" fill="#000"/><rect x="624" y="91" width="1" height="1" fill="#000"/><rect x="632" y="91" width="1" height="1" fill="#000"/><rect x="623" y="90" width="1" height="1" fill="#000"/><rect x="633" y="90" width="1" height="1" fill="#000"/><rect x="607.5" y="95.5" width="42" height="43" fill="#ffffc0" stroke="#000"/><path d="M628.5 138.5 L628.5 155.5" fill="none" stroke="#000"/><rect x="627" y="154" width="1" height="1" fill="#000"/><rect x="629" y="154" width="1" height="1" fill="#000"/><rect x="626" y="153" width="1" height="1" fill="#000"/><rect x="630" y="153" width="1" height="1" fill="#000"/><rect x="625" y="152" width="1" height="1" fill="#000"/><rect x="631" y="152" width="1" height="1" fill="#000"/><rect x="624" y="151" width="1" height="1" fill="#000"/><rect x="632" y="151" width="1" height="1" fill="#000"/><rect x="623" y="150" width="1" height="1" fill="#000"/><rect x="633" y="150" width="1" height="1" fill="#000"/><path d="M596.5 155.5H661.5L667.5 161.5V177.5L661.5 183.5H596.5L590.5 177.5V161.5Z" fill="#ffc0c0" stroke="#000"/><path d="M628.5 183.5 L628.5 190.5 L629.5 191.5 L629.5 199.5" fill="none" stroke="#000"/><rect x="628" y="198" width="1" height="1" fill="#000"/><rect x="630" y="198" width="1" height="1" fill="#000"/><rect x="627" y="197" width="1" height="1" fill="#000"/><rect x="631" y="197" width="1" height="1" fill="#000"/><rect x="626" y="196" width="1" height="1" fill="#000"/><rect x="632" y="196" width="1" height="1" fill="#000"/><rect x="625" y="195" width="1" height="1" fill="#000"/><rect x="633" y="195" width="1" height="1" fill="#000"/><rect x="624" y="194" width="1" height="1" fill="#000"/><rect x="634" y="194" width="1" height="1" fill="#000"/><rect x="598.5" y="199.5" width="62" height="59" fill="#ffffc0" stroke="#000"/><path d="M629.5 258.5 L629.5 266.5 L628.5 267.5 L628.5 275.5" fill="none" stroke="#000"/><rect x="627" y="274" width="1" height="1" fill="#000"/><rect x="629" y="274" width="1" height="1" fill="#000"/><rect x="626" y="273" width="1" height="1" fill="#000"/><rect x="630" y="273" width="1" height="1" fill="#000"/><rect x="625" y="272" width="1" height="1" fill="#000"/><rect x="631" y="272" width="1" height="1" fill="#000"/><rect x="624" y="271" width="1" height="1" fill="#000"/><rect x="632" y="271" width="1" height="1" fill="#000"/><rect x="623" y="270" width="1" height="1" fill="#000"/><rect x="633" y="270" width="1" height="1" fill="#000"/><path d="M596.5 275.5H661.5L667.5 281.5V297.5L661.5 303.5H596.5L590.5 297.5V281.5Z" fill="#ffc0c0" stroke="#000"/><path d="M628.5 303.5 L628.5 319.5" fill="none" stroke="#000"/><rect x="627" y="318" width="1" height="1" fill="#000"/><rect x="629" y="318" width="1" height="1" fill="#000"/><rect x="626" y="317" width="1" height="1" fill="#000"/><rect x="630" y="317" width="1" height="1" fill="#000"/><rect x="625" y="316" width="1" height="1" fill="#000"/><rect x="631" y="316" width="1" height="1" fill="#000"/><rect x="624" y="315" width="1" height="1" fill="#000"/><rect x="632" y="315" width="1" height="1" fill="#000"/><rect x="623" y="314" width="1" height="1" fill="#000"/><rect x="633" y="314" width="1" height="1" fill="#000"/><rect x="588.5" y="319.5" width="80" height="75" fill="#ffffc0" stroke="#000"/><path d="M628.5 394.5 L628.5 411.5" fill="none" stroke="#000"/><rect x="627" y="410" width="1" height="1" fill="#000"/><rect x="629" y="410" width="1" height="1" fill="#000"/><rect x="626" y="409" width="1" height="1" fill="#000"/><rect x="630" y="409" width="1" height="1" fill="#000"/><rect x="625" y="408" width="1" height="1" fill="#000"/><rect x="631" y="408" width="1" height="1" fill="#000"/><rect x="624" y="407" width="1" height="1" fill="#000"/><rect x="632" y="407" width="1" height="1" fill="#000"/><rect x="623" y="406" width="1" height="1" fill="#000"/><rect x="633" y="406" width="1" height="1" fill="#000"/><rect x="602.5" y="411.5" width="52" height="43" fill="#ffffc0" stroke="#000"/><path d="M628.5 454.5 L628.5 471.5" fill="none" stroke="#000"/><rect x="627" y="470" width="1" height="1" fill="#000"/><rect x="629" y="470" width="1" height="1" fill="#000"/><rect x="626" y="469" width="1" height="1" fill="#000"/><rect x="630" y="469" width="1" height="1" fill="#000"/><rect x="625" y="468" width="1" height="1" fill="#000"/><rect x="631" y="468" width="1" height="1" fill="#000"/><rect x="624" y="467" width="1" height="1" fill="#000"/><rect x="632" y="467" width="1" height="1" fill="#000"/><rect x="623" y="466" width="1" height="1" fill="#000"/><rect x="633" y="466" width="1" height="1" fill="#000"/><rect x="606.5" y="471.5" width="44" height="43" fill="#ffffc0" stroke="#000"/></svg>
<span class="t" style="left:406px;top:-1.62px;font-size:13.333px;line-height:16px;letter-spacing:-0.25px;">fsd;</span>
<span class="t" style="left:384.5px;top:58.38px;font-size:13.333px;line-height:16px;letter-spacing:-0.25px;">if x=1 then</span>
<span class="t" style="left:189.5px;top:102.38px;font-size:13.333px;line-height:16px;letter-spacing:-0.25px;">begin</span>
<span class="t" style="left:172.5px;top:162.38px;font-size:13.333px;line-height:16px;letter-spacing:-0.25px;">if y=1 then</span>
<span class="t" style="left:79.5px;top:206.38px;font-size:13.333px;line-height:16px;letter-spacing:-0.25px;">begin</span>
<span class="t" style="left:103.5px;top:222.38px;font-size:13.333px;line-height:16px;letter-spacing:-0.25px;">test;</span>
<span class="t" style="left:289.5px;top:206.38px;font-size:13.333px;line-height:16px;letter-spacing:-0.25px;">begin</span>
<span class="t" style="left:72.5px;top:282.38px;font-size:13.333px;line-height:16px;letter-spacing:-0.25px;">if z=1 then</span>
<span class="t" style="left:22.5px;top:326.38px;font-size:13.333px;line-height:16px;letter-spacing:-0.25px;">begin</span>
<span class="t" style="left:54.5px;top:342.38px;font-size:13.333px;line-height:16px;letter-spacing:-0.25px;">testt;</span>
<span class="t" style="left:46.5px;top:358.38px;font-size:13.333px;line-height:16px;letter-spacing:-0.25px;">end else</span>
<span class="t" style="left:132.5px;top:326.38px;font-size:13.333px;line-height:16px;letter-spacing:-0.25px;">test3;</span>
<span class="t" style="left:86.5px;top:402.38px;font-size:13.333px;line-height:16px;letter-spacing:-0.25px;">end else</span>
<span class="t" style="left:272.5px;top:266.38px;font-size:13.333px;line-height:16px;letter-spacing:-0.25px;">if u=1 then</span>
<span class="t" style="left:234.5px;top:310.38px;font-size:13.333px;line-height:16px;letter-spacing:-0.25px;">begin</span>
<span class="t" style="left:234.5px;top:326.38px;font-size:13.333px;line-height:16px;letter-spacing:-0.25px;">dd;</span>
<span class="t" style="left:234.5px;top:342.38px;font-size:13.333px;line-height:16px;letter-spacing:-0.25px;">end else</span>
<span class="t" style="left:340.5px;top:310.38px;font-size:13.333px;line-height:16px;letter-spacing:-0.25px;">dd;</span>
<span class="t" style="left:292.5px;top:386.38px;font-size:13.333px;line-height:16px;letter-spacing:-0.25px;">end;</span>
<span class="t" style="left:182.5px;top:446.38px;font-size:13.333px;line-height:16px;letter-spacing:-0.25px;">end else</span>
<span class="t" style="left:389.5px;top:538.38px;font-size:13.333px;line-height:16px;letter-spacing:-0.25px;">until x=1;</span>
<span class="t" style="left:613.5px;top:102.38px;font-size:13.333px;line-height:16px;letter-spacing:-0.25px;">begin</span>
<span class="t" style="left:596.5px;top:162.38px;font-size:13.333px;line-height:16px;letter-spacing:-0.25px;">if y=1 then</span>
<span class="t" style="left:604.5px;top:206.38px;font-size:13.333px;line-height:16px;letter-spacing:-0.25px;">begin</span>
<span class="t" style="left:628.5px;top:222.38px;font-size:13.333px;line-height:16px;letter-spacing:-0.25px;">test;</span>
<span class="t" style="left:596.5px;top:282.38px;font-size:13.333px;line-height:16px;letter-spacing:-0.25px;">if z=2 then</span>
<span class="t" style="left:594.5px;top:326.38px;font-size:13.333px;line-height:16px;letter-spacing:-0.25px;">begin</span>
<span class="t" style="left:626.5px;top:342.38px;font-size:13.333px;line-height:16px;letter-spacing:-0.25px;">ttest2;</span>
<span class="t" style="left:618.5px;top:358.38px;font-size:13.333px;line-height:16px;letter-spacing:-0.25px;">end;</span>
<span class="t" style="left:624.5px;top:418.38px;font-size:13.333px;line-height:16px;letter-spacing:-0.25px;">end else</span>
<span class="t" style="left:620.5px;top:478.38px;font-size:13.333px;line-height:16px;letter-spacing:-0.25px;">end;</span>
</div>
<div class="dither" style="left:1002px;top:114px;width:16px;height:585px;"></div>
<div class="b3" style="left:1002px;top:114px;width:16px;height:16px;"></div>
<svg style="left:1002px;top:114px" width="16" height="16"><path d="M4 9.5h7l-3.5-3.5z" fill="#000"/></svg>
<div class="b3" style="left:1002px;top:399px;width:16px;height:166px;"></div>
<div class="b3" style="left:1002px;top:683px;width:16px;height:16px;"></div>
<svg style="left:1002px;top:683px" width="16" height="16"><path d="M4 6.5h7l-3.5 3.5z" fill="#000"/></svg>
<div class="dither" style="left:362px;top:699px;width:640px;height:16px;"></div>
<div class="b3" style="left:362px;top:699px;width:16px;height:16px;"></div>
<svg style="left:362px;top:699px" width="16" height="16"><path d="M9.5 4v7l-3.5-3.5z" fill="#000"/></svg>
<div class="b3" style="left:445px;top:699px;width:368px;height:16px;"></div>
<div class="b3" style="left:986px;top:699px;width:16px;height:16px;"></div>
<svg style="left:986px;top:699px" width="16" height="16"><path d="M6.5 4v7l3.5-3.5z" fill="#000"/></svg>
<div style="left:1002px;top:699px;width:16px;height:16px;background:#d4d0c8"></div>
<div style="left:0;top:721px;width:1024px;height:23px;background:#d4d0c8"></div>
<div style="left:0;top:723px;width:1022px;height:1px;background:#808080"></div>
<div style="left:0;top:723px;width:1px;height:16px;background:#808080"></div>
<div style="left:0;top:739px;width:1023px;height:1px;background:#fff"></div>
<div style="left:1022px;top:723px;width:1px;height:17px;background:#fff"></div>
<div style="left:0;top:741px;width:1024px;height:1px;background:#fff"></div>
</div></body></html>
